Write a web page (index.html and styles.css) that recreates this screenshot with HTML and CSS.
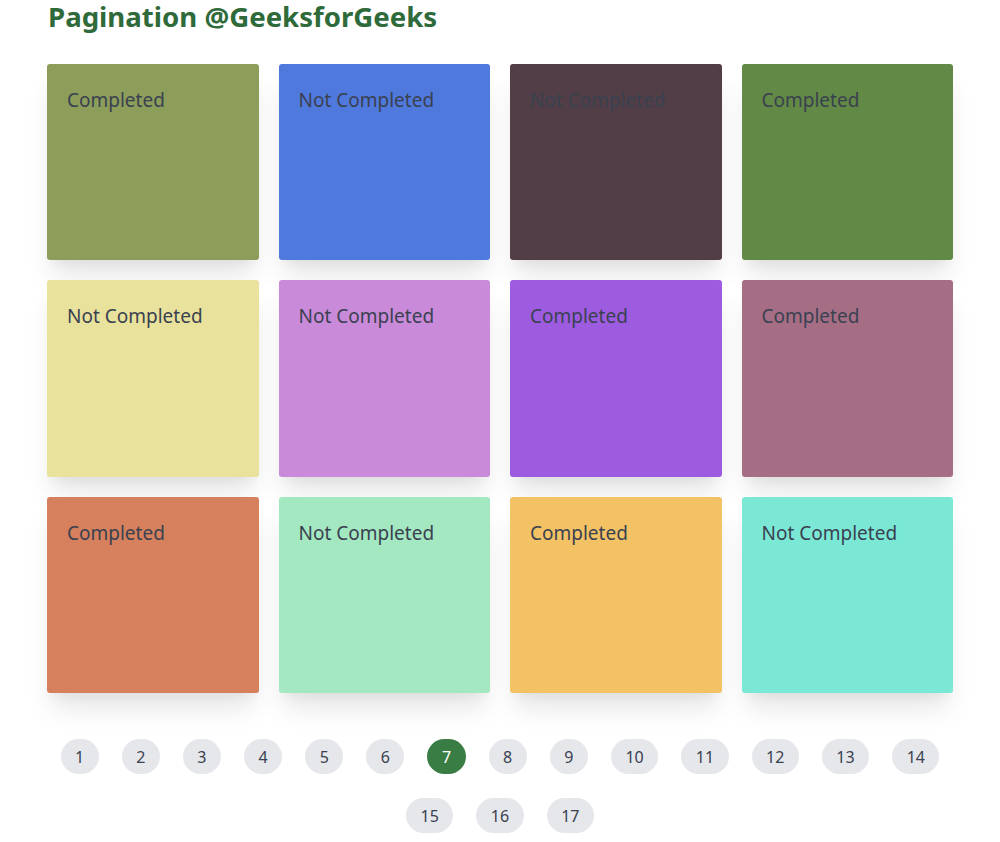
FILE: index.html
```html
<!DOCTYPE html>
<html>
<head>
  <meta charset="UTF-8">
  <title>Pagination</title>
  <link rel="stylesheet" href="styles.css">
</head>
<body>
  <h1 class="title">Pagination @GeeksforGeeks</h1>

  <div class="grid">
    <div class="card c1">Completed</div>
    <div class="card c2">Not Completed</div>
    <div class="card c3">Not Completed</div>
    <div class="card c4">Completed</div>
    <div class="card c5">Not Completed</div>
    <div class="card c6">Not Completed</div>
    <div class="card c7">Completed</div>
    <div class="card c8">Completed</div>
    <div class="card c9">Completed</div>
    <div class="card c10">Not Completed</div>
    <div class="card c11">Completed</div>
    <div class="card c12">Not Completed</div>
  </div>

  <div class="pagination">
    <button class="page">1</button>
    <button class="page">2</button>
    <button class="page">3</button>
    <button class="page">4</button>
    <button class="page">5</button>
    <button class="page">6</button>
    <button class="page active">7</button>
    <button class="page">8</button>
    <button class="page">9</button>
    <button class="page">10</button>
    <button class="page">11</button>
    <button class="page">12</button>
    <button class="page">13</button>
    <button class="page">14</button>
    <button class="page">15</button>
    <button class="page">16</button>
    <button class="page">17</button>
  </div>
</body>
</html>
```

FILE: styles.css
```css
body {
  margin: 0;
  padding: 0 47px;
  font-family: "Noto Sans", "Open Sans", sans-serif;
  background: #fff;
}
.title {
  margin: 0 0 30px 1px;
  font-size: 27.6px;
  line-height: 1.22;
  font-weight: 700;
  color: #2e6a3a;
}
.grid {
  display: grid;
  grid-template-columns: repeat(4, 1fr);
  gap: 20px 20px;
}
.card {
  height: 196.5px;
  box-sizing: border-box;
  padding: 22px 20px 20px;
  border-radius: 3px;
  font-size: 19px;
  line-height: 1.5;
  color: #3a4150;
  box-shadow: 0 20px 25px -5px rgba(0,0,0,0.1), 0 10px 10px -5px rgba(0,0,0,0.04);
}
.c1 { background: #8c9e5a; }
.c2 { background: #5079dd; }
.c3 { background: #523e46; }
.c4 { background: #628945; }
.c5 { background: #e8e29c; }
.c6 { background: #c98ad9; }
.c7 { background: #9d5ce0; }
.c8 { background: #a66e85; }
.c9 { background: #d6805d; }
.c10 { background: #a3e8c1; }
.c11 { background: #f2c265; }
.c12 { background: #7be8d6; }
.pagination {
  display: flex;
  flex-wrap: wrap;
  justify-content: center;
  gap: 24px 23px;
  margin-top: 46px;
}
.page {
  min-width: 38px;
  height: 35px;
  padding: 0 14.5px;
  border: none;
  border-radius: 18px;
  background: #e5e7eb;
  color: #3a4150;
  font-family: inherit;
  font-size: 16px;
  cursor: pointer;
}
.page.active {
  background: #3a7d44;
  color: #fff;
}
```
